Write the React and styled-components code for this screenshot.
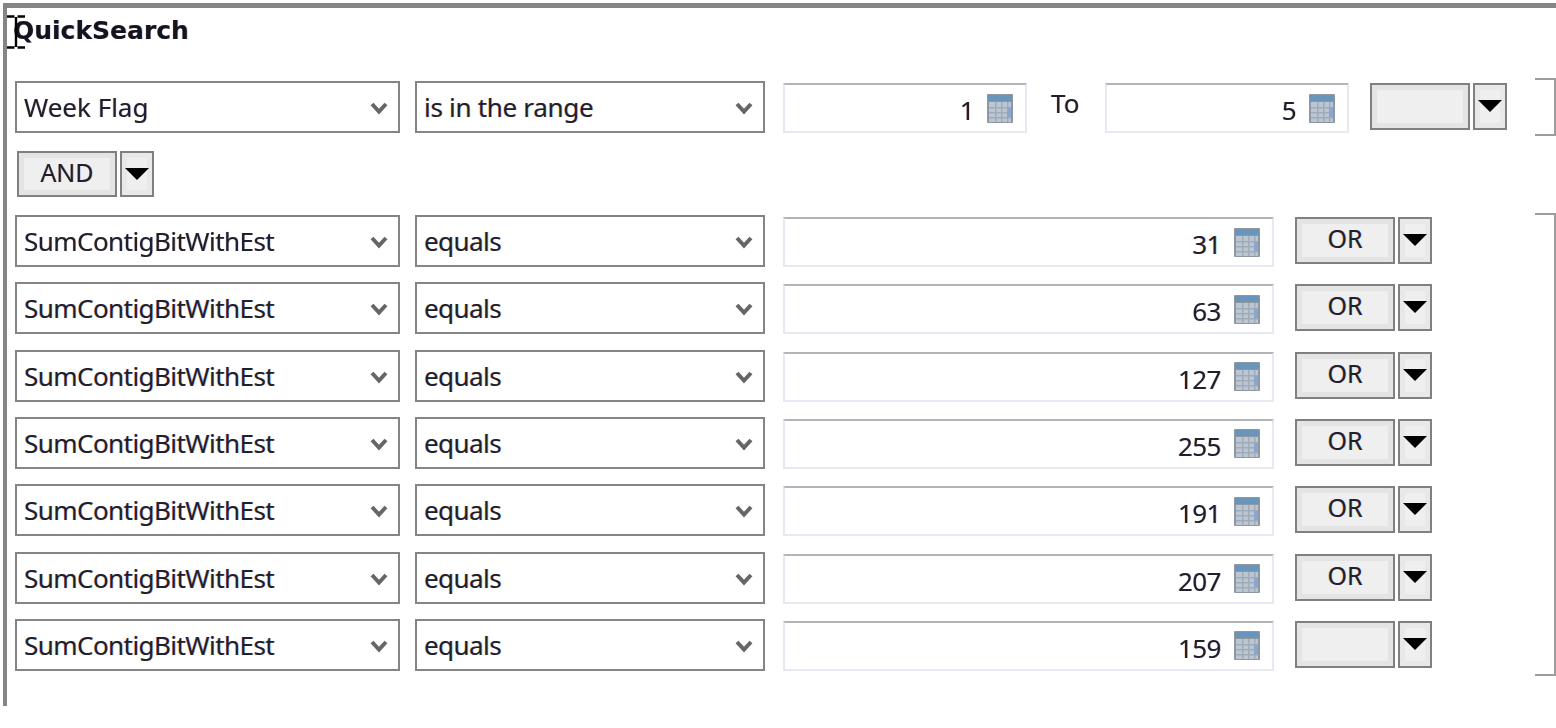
import React from "react";
import styled, { createGlobalStyle } from "styled-components";

const Global = createGlobalStyle`
  html, body { margin: 0; padding: 0; background: #fff; }
  body { width: 1556px; height: 728px; overflow: hidden; font-family: "Noto Sans", "Liberation Sans", sans-serif; color: #20202c; }
`;

const Page = styled.div`
  width: 1556px;
  height: 728px;
  padding: 3px 0 0 3px;
  box-sizing: border-box;
  background: #fff;
`;

const Panel = styled.section`
  position: relative;
  height: 703px;
  box-sizing: border-box;
  border-top: 5px solid #858585;
  border-left: 4px solid #858585;
  padding: 0 0 0 8px;
  filter: blur(0.45px);
  text-shadow: -0.6px 0 rgba(225, 130, 40, 0.35), 0.6px 0 rgba(50, 90, 220, 0.35);
`;

const Title = styled.h1`
  margin: 0 0 0 -2px;
  height: 73px;
  padding: 8px 0 0 0;
  box-sizing: border-box;
  font: bold 25px/30px "DejaVu Sans", sans-serif;
  letter-spacing: 0;
  color: #14141e;
`;

const Cursor = styled.svg`
  position: absolute;
  left: -1px;
  top: 7px;
  width: 20px;
  height: 34px;
`;

const Group = styled.div`
  display: flex;
  justify-content: space-between;
  align-items: stretch;
`;

const Rows = styled.div`
  display: flex;
  flex-direction: column;
  gap: 15.33px;
`;

const Row = styled.div`
  display: flex;
  align-items: flex-start;
  height: 52px;
`;

const Select = styled.div`
  width: ${(p) => p.$w}px;
  height: 52px;
  margin-right: ${(p) => p.$gap}px;
  box-sizing: border-box;
  border: 2px solid #858585;
  padding: 0 10px 0 7px;
  display: flex;
  align-items: center;
  justify-content: space-between;
  font-size: 26px;
  letter-spacing: ${(p) => p.$ls || "-0.55px"};
  background: #fff;
`;

const Chevron = styled.svg`
  width: 18px;
  height: 14px;
  flex: none;
  margin-top: 2px;
`;

const Field = styled.div`
  width: ${(p) => p.$w}px;
  height: 50px;
  margin-top: 2px;
  box-sizing: border-box;
  border: 2px solid #e6e9f1;
  border-top-color: #b4b4b8;
  padding: 0 12px 0 0;
  display: flex;
  align-items: center;
  justify-content: flex-end;
  gap: 13px;
  font-size: 26px;
  letter-spacing: -0.5px;
  background: #fff;
`;

const Num = styled.span`
  position: relative;
  top: 2px;
`;

const To = styled.span`
  width: 78px;
  padding-left: 24px;
  box-sizing: border-box;
  font-size: 26px;
  line-height: 40px;
  margin-top: 2px;
`;

const Combo = styled.div`
  display: flex;
  gap: 3px;
  margin: ${(p) => p.$m || "2px 0 0 21px"};
  height: ${(p) => p.$h || 47}px;
`;

const ComboMain = styled.div`
  width: 100px;
  box-sizing: border-box;
  border: 2px solid #808080;
  box-shadow: inset 0 0 0 5px #e4e4e4;
  background: #efefef;
  display: flex;
  align-items: center;
  justify-content: center;
  font-size: 25px;
  padding-bottom: 5px;
`;

const ComboArrow = styled.div`
  width: 34px;
  box-sizing: border-box;
  border: 2px solid #808080;
  box-shadow: inset 0 0 0 5px #e8e8e8;
  background: #efefef;
  display: flex;
  align-items: flex-start;
  justify-content: center;
  padding-top: 15px;

  &::after {
    content: "";
    border-left: 12px solid transparent;
    border-right: 12px solid transparent;
    border-top: 12px solid #000;
  }
`;

const Bracket = styled.div`
  width: 21px;
  box-sizing: border-box;
  border: 2px solid #9c9c9c;
  border-left: 0;
  margin: ${(p) => p.$m};
`;

const Spacer = styled.div`
  height: 18px;
`;

const AndRow = styled.div`
  height: 64px;
`;

const Calendar = () => (
  <svg width="26" height="29" viewBox="0 0 26 29" style={{ flex: "none" }}>
    <rect width="26" height="29" rx="1" fill="#8e98a2" />
    <rect x="1" y="1" width="24" height="6" fill="#6a94ba" />
    <rect x="2" y="8" width="22" height="20" fill="#bcc6d2" />
    {[8, 14, 20].map((x) => (
      <rect key={x} x={x} y="8" width="1.5" height="20" fill="#a0abba" />
    ))}
    {[13, 18, 23].map((y) => (
      <rect key={y} x="2" y={y} width="22" height="1.5" fill="#a0abba" />
    ))}
    <rect x="20" y="14" width="4" height="9" fill="#8aa6cf" />
  </svg>
);

const Down = () => (
  <Chevron viewBox="0 0 18 14">
    <path d="M2 3 L9 10.5 L16 3" fill="none" stroke="#666" strokeWidth="4" />
  </Chevron>
);

const Choice = ({ w, gap, children, ls }) => (
  <Select $w={w} $gap={gap} $ls={ls}>
    <span>{children}</span>
    <Down />
  </Select>
);

const Op = ({ label, ...rest }) => (
  <Combo {...rest}>
    <ComboMain>{label}</ComboMain>
    <ComboArrow />
  </Combo>
);

const rows = [
  ["31", "OR"],
  ["63", "OR"],
  ["127", "OR"],
  ["255", "OR"],
  ["191", "OR"],
  ["207", "OR"],
  ["159", ""],
];

export default function App() {
  return (
    <Page>
      <Global />
      <Panel>
        <Cursor viewBox="0 0 20 34">
          <path d="M1 1.5 H8.5 M11.5 1.5 H19 M10 2 V32 M1 32.5 H8.5 M11.5 32.5 H19" fill="none" stroke="#000" strokeWidth="2.4" />
        </Cursor>
        <Title>QuickSearch</Title>
        <Group>
          <Rows>
            <Row>
              <Choice w={385} gap={15} ls="0">Week Flag</Choice>
              <Choice w={350} gap={18} ls="-0.3px">is in the range</Choice>
              <Field $w={244}>
                <Num>1</Num>
                <Calendar />
              </Field>
              <To>To</To>
              <Field $w={244}>
                <Num>5</Num>
                <Calendar />
              </Field>
              <Op label="" />
            </Row>
          </Rows>
          <Bracket $m="-3px 0 -3px 0" />
        </Group>
        <Spacer />
        <AndRow>
          <Op label="AND" $m="0 0 0 2px" $h={46} />
        </AndRow>
        <Group>
          <Rows>
            {rows.map(([n, op], i) => (
              <Row key={i}>
                <Choice w={385} gap={15}>SumContigBitWithEst</Choice>
                <Choice w={350} gap={18}>equals</Choice>
                <Field $w={491}>
                  <Num>{n}</Num>
                  <Calendar />
                </Field>
                <Op label={op} />
              </Row>
            ))}
          </Rows>
          <Bracket $m="-2px 0 -5px 0" />
        </Group>
      </Panel>
    </Page>
  );
}
